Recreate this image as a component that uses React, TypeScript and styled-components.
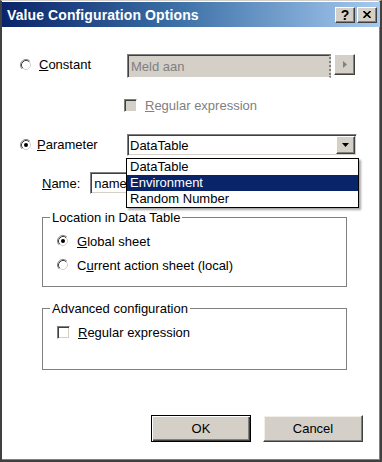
import React from 'react';
import styled, { createGlobalStyle } from 'styled-components';

const GlobalStyle = createGlobalStyle`
  html, body {
    margin: 0;
    padding: 0;
    background: #ffffff;
  }
  body {
    font-family: "Liberation Sans", Arial, sans-serif;
    font-size: 13px;
    color: #000000;
  }
`;

const Window = styled.div`
  width: 382px;
  height: 462px;
  box-sizing: border-box;
  display: flex;
  flex-direction: column;
  background: #ffffff;
  border-style: solid;
  border-width: 1px 2px 2px 2px;
  border-color: #d4d0c8 #404040 #404040 #404040;
  box-shadow: inset -1px -1px #808080;
  padding: 1px 0 2px 0;
`;

const TitleBar = styled.div`
  height: 25px;
  flex: none;
  display: flex;
  align-items: center;
  justify-content: space-between;
  padding: 0 3px 0 5px;
  background: linear-gradient(90deg, #0a246a 0%, #3a6ea5 45%, #a6caf0 100%);
`;

const TitleText = styled.span`
  color: #ffffff;
  font-weight: 700;
  font-size: 14px;
  letter-spacing: 0.1px;
`;

const TitleButtons = styled.div`
  display: flex;
  gap: 2px;
`;

const TitleButton = styled.div`
  width: 20px;
  height: 16px;
  box-sizing: border-box;
  display: flex;
  align-items: center;
  justify-content: center;
  background: #d4d0c8;
  border-style: solid;
  border-width: 1px;
  border-color: #ffffff #404040 #404040 #ffffff;
  box-shadow: inset -1px -1px #808080;
  font-weight: 700;
  font-size: 14px;
  line-height: 1;
  color: #000000;
`;

const DialogBody = styled.div`
  flex: 1;
  display: flex;
  flex-direction: column;
  padding: 27px 17px 0 18px;
`;

const OptionRow = styled.div<{ $gap: number }>`
  display: grid;
  grid-template-columns: 107px auto;
  align-items: start;
  margin-top: ${p => p.$gap}px;
`;

const OptionLabel = styled.div<{ $gap?: number }>`
  height: 21px;
  display: flex;
  align-items: center;
  gap: ${p => p.$gap ?? 7}px;
  white-space: nowrap;
`;

const RadioSvg = styled.svg`
  flex: none;
  display: block;
`;

const Accel = styled.span`
  text-decoration: underline;
`;

const FieldGroup = styled.div`
  display: flex;
  align-items: flex-start;
  gap: 3px;
`;

const TextField = styled.div<{ $width: number; $disabled?: boolean }>`
  width: ${p => p.$width}px;
  height: 24px;
  box-sizing: border-box;
  display: flex;
  align-items: center;
  padding-left: 3px;
  background: ${p => (p.$disabled ? '#d4d0c8' : '#ffffff')};
  color: ${p => (p.$disabled ? '#808080' : '#000000')};
  border-style: solid;
  border-width: 1px;
  border-color: #808080 #ffffff #ffffff #808080;
  box-shadow: inset 1px 1px #404040;
  border-right: 2px dotted #808080;
`;

const ArrowButton = styled.div`
  width: 21px;
  height: 21px;
  box-sizing: border-box;
  display: flex;
  align-items: center;
  justify-content: center;
  background: #d4d0c8;
  border-style: solid;
  border-width: 1px;
  border-color: #ffffff #404040 #404040 #ffffff;
  box-shadow: inset -1px -1px #808080;
`;

const CheckRow = styled.div<{ $indent: number; $gap: number }>`
  display: flex;
  align-items: center;
  height: 16px;
  gap: 8px;
  margin-top: ${p => p.$gap}px;
  padding-left: ${p => p.$indent}px;
`;

const CheckBox = styled.div<{ $disabled?: boolean }>`
  width: 13px;
  height: 13px;
  flex: none;
  box-sizing: border-box;
  background: ${p => (p.$disabled ? '#d4d0c8' : '#ffffff')};
  border-style: solid;
  border-width: 1px;
  border-color: #808080 #ffffff #ffffff #808080;
  box-shadow: inset 1px 1px #404040, inset -1px -1px #d4d0c8;
`;

const CheckText = styled.span<{ $disabled?: boolean }>`
  color: ${p => (p.$disabled ? '#808080' : '#000000')};
`;

const ComboWrap = styled.div`
  position: relative;
  width: 230px;
`;

const Combo = styled.div`
  height: 22px;
  box-sizing: border-box;
  display: flex;
  align-items: center;
  justify-content: space-between;
  padding: 1px 1px 1px 2px;
  background: #ffffff;
  border-style: solid;
  border-width: 1px;
  border-color: #808080 #ffffff #ffffff #808080;
  box-shadow: inset 1px 1px #404040, inset -1px -1px #d4d0c8;
`;

const ComboArrow = styled(ArrowButton)`
  width: 19px;
  height: 18px;
`;

const DropList = styled.div`
  position: absolute;
  top: 24px;
  left: -1px;
  width: 233px;
  box-sizing: border-box;
  background: #ffffff;
  border: 1px solid #000000;
  box-shadow: 2px 2px 2px rgba(0, 0, 0, 0.35);
  z-index: 2;
`;

const DropItem = styled.div<{ $selected?: boolean }>`
  height: 16px;
  line-height: 16px;
  padding-left: 3px;
  background: ${p => (p.$selected ? '#0a246a' : '#ffffff')};
  color: ${p => (p.$selected ? '#ffffff' : '#000000')};
`;

const NameRow = styled.div`
  display: flex;
  align-items: center;
  gap: 10px;
  margin-top: 16px;
  padding-left: 22px;
`;

const NameInput = styled.div`
  width: 210px;
  height: 22px;
  box-sizing: border-box;
  display: flex;
  align-items: center;
  padding-left: 3px;
  background: #ffffff;
  border-style: solid;
  border-width: 1px;
  border-color: #808080 #ffffff #ffffff #808080;
  box-shadow: inset 1px 1px #404040, inset -1px -1px #d4d0c8;
`;

const GroupBox = styled.fieldset<{ $gap: number; $padTop: number; $padBottom: number }>`
  width: 305px;
  box-sizing: border-box;
  margin: ${p => p.$gap}px 0 0 22px;
  padding: ${p => p.$padTop}px 8px ${p => p.$padBottom}px 14px;
  border: 1px solid #808080;
  display: flex;
  flex-direction: column;
  gap: 8px;
  min-width: 0;
`;

const GroupLegend = styled.legend`
  padding: 0 2px;
  margin-left: -7px;
  line-height: 15px;
`;

const GroupOption = styled.div`
  height: 16px;
  display: flex;
  align-items: center;
  gap: 8px;
`;

const ButtonRow = styled.div`
  display: flex;
  justify-content: flex-end;
  gap: 12px;
  margin-top: 45px;
`;

const PushButton = styled.div<{ $default?: boolean }>`
  width: 100px;
  height: 27px;
  box-sizing: border-box;
  display: flex;
  align-items: center;
  justify-content: center;
  background: #d4d0c8;
  border: 1px solid ${p => (p.$default ? '#000000' : 'transparent')};
  box-shadow: ${p =>
    p.$default
      ? 'inset 1px 1px #ffffff, inset -1px -1px #404040, inset -2px -2px #808080'
      : 'inset 0 0 0 0 transparent'};
  ${p =>
    !p.$default &&
    `border-color: #ffffff #404040 #404040 #ffffff;
     box-shadow: inset -1px -1px #808080, inset 1px 1px #f0efe9;`}
`;

const RadioMark = ({ checked }: { checked?: boolean }) => (
  <RadioSvg width="12" height="12" viewBox="0 0 12 12">
    <circle cx="6" cy="6" r="5" fill="#ffffff" />
    <path d="M2.11 9.89 A5.5 5.5 0 0 1 9.89 2.11" fill="none" stroke="#808080" />
    <path d="M2.82 9.18 A4.5 4.5 0 0 1 9.18 2.82" fill="none" stroke="#404040" />
    <path d="M2.82 9.18 A4.5 4.5 0 0 0 9.18 2.82" fill="none" stroke="#d4d0c8" />
    {checked && <circle cx="6" cy="6" r="2" fill="#000000" />}
  </RadioSvg>
);

const App: React.FC = () => {
  const sources = ['DataTable', 'Environment', 'Random Number'];

  return (
    <>
      <GlobalStyle />
      <Window>
        <TitleBar>
          <TitleText>Value Configuration Options</TitleText>
          <TitleButtons>
            <TitleButton>?</TitleButton>
            <TitleButton>
              <svg width="8" height="7" viewBox="0 0 8 7">
                <path d="M0.5 0 L7.5 7 M7.5 0 L0.5 7" stroke="#000" strokeWidth="1.6" />
              </svg>
            </TitleButton>
          </TitleButtons>
        </TitleBar>

        <DialogBody>
          <OptionRow $gap={0}>
            <OptionLabel>
              <RadioMark />
              <span>
                <Accel>C</Accel>onstant
              </span>
            </OptionLabel>
            <FieldGroup>
              <TextField $width={204} $disabled>
                Meld aan
              </TextField>
              <ArrowButton>
                <svg width="4" height="7" viewBox="0 0 4 7">
                  <polygon points="0,0 4,3.5 0,7" fill="#808080" />
                </svg>
              </ArrowButton>
            </FieldGroup>
          </OptionRow>

          <CheckRow $indent={104} $gap={19}>
            <CheckBox $disabled />
            <CheckText $disabled>
              <Accel>R</Accel>egular expression
            </CheckText>
          </CheckRow>

          <OptionRow $gap={21}>
            <OptionLabel $gap={5}>
              <RadioMark checked />
              <span>
                <Accel>P</Accel>arameter
              </span>
            </OptionLabel>
            <ComboWrap>
              <Combo>
                <span>DataTable</span>
                <ComboArrow>
                  <svg width="7" height="4" viewBox="0 0 7 4">
                    <polygon points="0,0 7,0 3.5,4" fill="#000000" />
                  </svg>
                </ComboArrow>
              </Combo>
              <DropList>
                {sources.map(s => (
                  <DropItem key={s} $selected={s === 'Environment'}>
                    {s}
                  </DropItem>
                ))}
              </DropList>
            </ComboWrap>
          </OptionRow>

          <NameRow>
            <span>
              <Accel>N</Accel>ame:
            </span>
            <NameInput>name</NameInput>
          </NameRow>

          <GroupBox $gap={16} $padTop={8} $padBottom={13}>
            <GroupLegend>Location in Data Table</GroupLegend>
            <GroupOption>
              <RadioMark checked />
              <span>
                <Accel>G</Accel>lobal sheet
              </span>
            </GroupOption>
            <GroupOption>
              <RadioMark />
              <span>
                C<Accel>u</Accel>rrent action sheet (local)
              </span>
            </GroupOption>
          </GroupBox>

          <GroupBox $gap={14} $padTop={8} $padBottom={29}>
            <GroupLegend>Advanced configuration</GroupLegend>
            <GroupOption>
              <CheckBox />
              <span>
                <Accel>R</Accel>egular expression
              </span>
            </GroupOption>
          </GroupBox>

          <ButtonRow>
            <PushButton $default>OK</PushButton>
            <PushButton>Cancel</PushButton>
          </ButtonRow>
        </DialogBody>
      </Window>
    </>
  );
};

export default App;
